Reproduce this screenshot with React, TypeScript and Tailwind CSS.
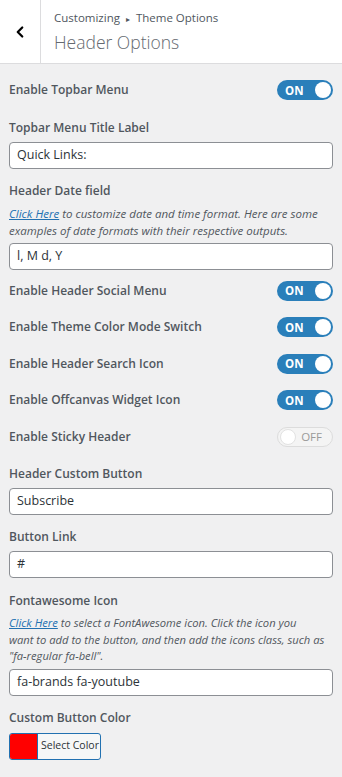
import { ChevronLeft } from 'lucide-react'

const font = { fontFamily: '"Open Sans", "Noto Sans", sans-serif' }

function Toggle({ on }: { on: boolean }) {
  if (on) {
    return (
      <div className="relative w-[56px] h-[20px] rounded-full bg-[#2a7fba] flex items-center">
        <span className="ml-[8px] text-[11.5px] font-bold text-white leading-none">ON</span>
        <span className="absolute right-[2px] top-[2px] w-[16px] h-[16px] rounded-full bg-white" />
      </div>
    )
  }
  return (
    <div className="relative w-[56px] h-[20px] rounded-full bg-[#f4f4f4] border border-[#dcdcdc] flex items-center justify-end">
      <span className="mr-[10px] text-[11.5px] text-[#9a9a9a] leading-none">OFF</span>
      <span className="absolute left-[2px] top-[1px] w-[16px] h-[16px] rounded-full bg-white border border-[#e2e2e2]" />
    </div>
  )
}

function ToggleRow({ label, on }: { label: string; on: boolean }) {
  return (
    <div className="h-[36.5px] flex items-center justify-between">
      <span className="text-[12px] font-semibold text-[#50575e]">{label}</span>
      <Toggle on={on} />
    </div>
  )
}

function Label({ children, className = '' }: { children: string; className?: string }) {
  return (
    <div className={`h-[18px] leading-[18px] text-[12px] font-semibold text-[#50575e] ${className}`}>
      {children}
    </div>
  )
}

function Field({ value, className = '' }: { value: string; className?: string }) {
  return (
    <div className={`h-[27px] bg-white border border-[#8c8f94] rounded-[4px] flex items-center px-[7px] text-[12.5px] text-[#2c3338] ${className}`}>
      {value}
    </div>
  )
}

export default function App() {
  return (
    <div className="w-[342px] h-[777px] bg-[#f0f0f1] overflow-hidden" style={font}>
      {/* Header */}
      <div className="h-[64px] bg-white border-b border-[#dcdcde] flex">
        <div className="w-[41px] border-r border-[#dcdcde] flex items-center justify-center">
          <ChevronLeft className="w-[18px] h-[18px] text-black" strokeWidth={3} />
        </div>
        <div className="pl-[13px] pt-[10px]">
          <div className="text-[11.5px] text-[#50575e] leading-[16px]">
            Customizing <span className="text-[8px] mx-[3px]">▸</span> Theme Options
          </div>
          <div className="text-[17.5px] text-[#646970] font-light leading-[24px] mt-[3px]">Header Options</div>
        </div>
      </div>

      <div className="px-[9px] pt-[8px]">
        <ToggleRow label="Enable Topbar Menu" on />

        <Label className="mt-[10px]">Topbar Menu Title Label</Label>
        <Field value="Quick Links:" className="mt-[5px]" />

        <Label className="mt-[13px]">Header Date field</Label>
        <p className="mt-[5px] text-[11.5px] italic leading-[17px] text-[#50575e]">
          <span className="text-[#2271b1] underline">Click Here</span> to customize date and time format. Here are some examples of date formats with their respective outputs.
        </p>
        <Field value="l, M d, Y" className="mt-[4px]" />

        <div className="mt-[3px]">
          <ToggleRow label="Enable Header Social Menu" on />
          <ToggleRow label="Enable Theme Color Mode Switch" on />
          <ToggleRow label="Enable Header Search Icon" on />
          <ToggleRow label="Enable Offcanvas Widget Icon" on />
          <ToggleRow label="Enable Sticky Header" on={false} />
        </div>

        <Label className="mt-[10px]">Header Custom Button</Label>
        <Field value="Subscribe" className="mt-[5px]" />

        <Label className="mt-[13px]">Button Link</Label>
        <Field value="#" className="mt-[5px]" />

        <Label className="mt-[14px]">Fontawesome Icon</Label>
        <p className="mt-[5px] text-[11.2px] italic leading-[16.5px] text-[#50575e] whitespace-nowrap">
          <span className="text-[#2271b1] underline">Click Here</span> to select a FontAwesome icon. Click the icon you
          <br />
          want to add to the button, and then add the icons class, such as
          <br />
          "fa-regular fa-bell".
        </p>
        <Field value="fa-brands fa-youtube" className="mt-[4px]" />

        <Label className="mt-[13px]">Custom Button Color</Label>
        <div className="mt-[6px] w-[92px] h-[27px] border border-[#2271b1] rounded-[3px] bg-[#f6f7f7] flex overflow-hidden">
          <div className="w-[28px] shrink-0 bg-[#ff0000] border-r border-[#2271b1]" />
          <div className="flex-1 flex items-center justify-center pl-[2px] text-[10.5px] text-[#2c3338] whitespace-nowrap">Select Color</div>
        </div>
      </div>
    </div>
  )
}
